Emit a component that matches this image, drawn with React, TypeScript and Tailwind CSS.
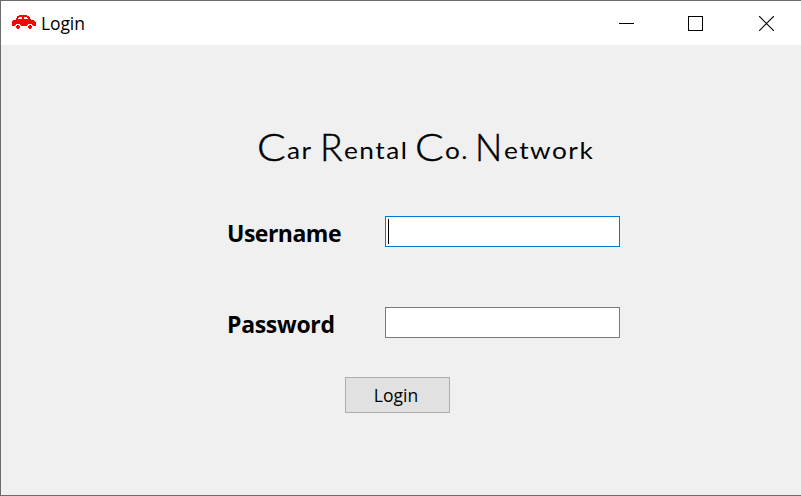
import React from 'react';

function CarIcon() {
  return (
    <svg width="24" height="16" viewBox="0 0 24 16" fill="#ff0000" shapeRendering="crispEdges">
      <path
        fillRule="evenodd"
        d="M7 0H15V1H17V2H18V4H19V5H22V6H23V7H24V11H21V10H20V9H16V10H15V11H9V10H8V9H4V10H3V11H0V6H1V5H4V3H5V1H7Z M7 2V3H6V4H10V2Z M12 2V4H16V3H15V2Z"
      />
      <path d="M5 10H7V11H8V13H7V14H5V13H4V11H5Z" />
      <path d="M17 10H19V11H20V13H19V14H17V13H16V11H17Z" />
    </svg>
  );
}

function WindowButtons() {
  return (
    <div className="ml-auto flex h-full items-center">
      <button className="flex h-full w-[69px] items-center justify-center" aria-label="Minimize">
        <svg width="15" height="15" viewBox="0 0 15 15" shapeRendering="crispEdges">
          <path d="M0 7.5H15" stroke="#000" />
        </svg>
      </button>
      <button className="flex h-full w-[69px] items-center justify-center" aria-label="Maximize">
        <svg width="15" height="15" viewBox="0 0 15 15" shapeRendering="crispEdges">
          <path d="M.5 .5H14.5V14.5H.5Z" fill="none" stroke="#000" />
        </svg>
      </button>
      <button className="flex h-full w-[71px] items-center justify-center pl-px" aria-label="Close">
        <svg width="15" height="15" viewBox="0 0 15 15">
          <path d="M0 0L15 15M15 0L0 15" stroke="#000" strokeWidth="1.1" />
        </svg>
      </button>
    </div>
  );
}

function Word({ initial, rest, width, capWidth, stretch }: { initial: string; rest: string; width: string; capWidth: string; stretch: string }) {
  return (
    <span className={`flex items-baseline whitespace-nowrap ${width}`}>
      <span className={`origin-left translate-y-0.5 text-[38px] leading-[36px] font-light [-webkit-text-stroke:0.5px_black] ${capWidth} ${stretch}`}>{initial}</span>
      <span className="origin-left scale-x-[1.14] text-[23px] leading-[36px] tracking-[1.3px]">{rest}</span>
    </span>
  );
}

export default function App() {
  return (
    <div className="flex h-[496px] w-[801px] flex-col overflow-hidden border-t border-b border-l border-[#6b6b6b] bg-[#f0f0f0] font-['Open_Sans','Noto_Sans',sans-serif] text-black">
      <header className="flex h-11 shrink-0 items-center bg-white pl-[11px]">
        <CarIcon />
        <span className="ml-[5px] text-[17.5px] leading-6 tracking-[-0.1px]">Login</span>
        <WindowButtons />
      </header>
      <main className="flex flex-col">
        <h1 className="mt-[81px] ml-[256px] flex h-9 font-['Lato','Open_Sans',sans-serif]">
          <Word initial="C" rest="ar" width="w-[63px]" capWidth="w-[30px]" stretch="scale-x-[1.12]" />
          <Word initial="R" rest="ental" width="w-[95px]" capWidth="w-[24px]" stretch="scale-x-[0.98]" />
          <Word initial="C" rest="o." width="w-[60px]" capWidth="w-[30px]" stretch="scale-x-[1.12]" />
          <Word initial="N" rest="etwork" width="w-[120px]" capWidth="w-[29px]" stretch="scale-x-[0.95]" />
        </h1>
        <label className="mt-[54px] ml-[226px] flex h-[31px] items-center">
          <span className="w-[158px] pt-0.5 text-[23px] leading-[30px] font-bold tracking-[-0.5px]">Username</span>
          <span className="flex h-[31px] w-[235px] items-center border border-[#0078d7] bg-white pl-[2px]">
            <span className="h-[25px] w-px bg-black" />
          </span>
        </label>
        <label className="mt-[60px] ml-[226px] flex h-[31px] items-center">
          <span className="w-[158px] pt-0.5 text-[23px] leading-[30px] font-bold tracking-[-0.3px]">Password</span>
          <span className="h-[31px] w-[235px] border border-[#7a7a7a] bg-white" />
        </label>
        <button className="mt-[39px] ml-[344px] flex h-9 w-[105px] items-center justify-center border border-[#adadad] bg-[#e1e1e1] pr-[3px] text-[17.5px] leading-6">
          Login
        </button>
      </main>
    </div>
  );
}
